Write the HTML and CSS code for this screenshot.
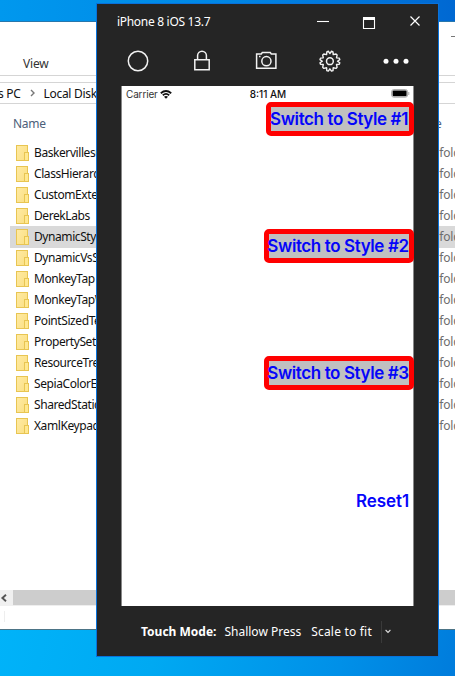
FILE: index.html
```html
<!DOCTYPE html>
<html lang="en">
<head>
<meta charset="utf-8">
<title>iPhone 8 iOS 13.7</title>
<link rel="stylesheet" href="styles.css">
</head>
<body>
<main class="desktop">
  <section class="explorer">
    <header class="ribbon"><span>View</span><i class="minimize-mark"></i></header>
    <nav class="address"><span>s PC</span><svg width="6" height="8" viewBox="0 0 6 8"><path d="M1 1l3 3-3 3" fill="none" stroke="#777" stroke-width="1.4"/></svg><span class="disk">Local Disk</span></nav>
    <div class="columns"><span>Name</span><span>Type</span></div>
    <ul class="files">
      <li><i class="folder"></i><span class="name">BaskervillesCoin</span><span class="type">File folder</span></li>
      <li><i class="folder"></i><span class="name">ClassHierarchy</span><span class="type">File folder</span></li>
      <li><i class="folder"></i><span class="name">CustomExtension</span><span class="type">File folder</span></li>
      <li><i class="folder"></i><span class="name">DerekLabs</span><span class="type">File folder</span></li>
      <li class="selected"><i class="folder"></i><span class="name">DynamicStyles</span><span class="type">File folder</span></li>
      <li><i class="folder"></i><span class="name">DynamicVsStatic</span><span class="type">File folder</span></li>
      <li><i class="folder"></i><span class="name">MonkeyTap</span><span class="type">File folder</span></li>
      <li><i class="folder"></i><span class="name">MonkeyTapWith</span><span class="type">File folder</span></li>
      <li><i class="folder"></i><span class="name">PointSizedText</span><span class="type">File folder</span></li>
      <li><i class="folder"></i><span class="name">PropertySetters</span><span class="type">File folder</span></li>
      <li><i class="folder"></i><span class="name">ResourceTrees</span><span class="type">File folder</span></li>
      <li><i class="folder"></i><span class="name">SepiaColorEffect</span><span class="type">File folder</span></li>
      <li><i class="folder"></i><span class="name">SharedStatics</span><span class="type">File folder</span></li>
      <li><i class="folder"></i><span class="name">XamlKeypad</span><span class="type">File folder</span></li>
    </ul>
    <div class="scrollbar"><span class="arrow"><svg width="8" height="8" viewBox="0 0 8 8"><path d="M6 .8L2.4 4 6 7.2" fill="none" stroke="#555" stroke-width="1.9"/></svg></span></div>
    <footer class="status"><i></i></footer>
  </section>

  <section class="simulator">
    <header class="titlebar">
      <span class="title">iPhone 8 iOS 13.7</span>
      <svg class="controls" width="106" height="16" viewBox="0 0 106 16" fill="none" stroke="#fff">
        <path d="M0 8.5h12" stroke-width="1.1"/>
        <path d="M46.5 5v10.5h11V5" stroke-width="1.1"/><path d="M46 5.5h12" stroke-width="3"/>
        <path d="M93.5 3.5l9 9m0-9l-9 9" stroke-width="1.2"/>
      </svg>
    </header>
    <nav class="toolbar">
      <svg width="24" height="24" viewBox="0 0 24 24"><circle cx="12" cy="12" r="9.7"/></svg>
      <svg width="24" height="24" viewBox="0 0 24 24"><path d="M4.8 10.7h14.4v10.1H4.8zM7.6 10.5V6.6a4.4 4.4 0 0 1 8.8 0v3.9"/></svg>
      <svg width="24" height="24" viewBox="0 0 24 24"><path d="M2.6 5h4.7l1-1.4h8l1 1.4h4.6v14.2H2.6z"/><circle cx="12.4" cy="12.2" r="4.6"/><path d="M5 7.6h1.5"/></svg>
      <svg width="24" height="24" viewBox="0 0 24 24"><path d="M10.3 2.2L11.9 4.6 13.5 2.2 15 2.8 15.2 5.6 18 5 19.1 6.1 18.5 8.9 21.3 9.1 21.8 10.6 19.5 12.2 21.8 13.8 21.3 15.3 18.5 15.5 19.1 18.3 18 19.4 15.2 18.8 15 21.6 13.5 22.1 11.9 19.8 10.3 22.1 8.8 21.6 8.6 18.8 5.8 19.4 4.7 18.3 5.3 15.5 2.5 15.3 2 13.8 4.3 12.2 2 10.6 2.5 9.1 5.3 8.9 4.7 6.1 5.8 5 8.6 5.6 8.8 2.8z" stroke-width="1.4" stroke-linejoin="round"/><circle cx="11.9" cy="12.2" r="3.4"/></svg>
      <svg width="28" height="24" viewBox="0 0 28 24" class="dots"><circle cx="4" cy="12.2" r="2.5"/><circle cx="14" cy="12.2" r="2.5"/><circle cx="24" cy="12.2" r="2.5"/></svg>
    </nav>
    <div class="screen">
      <div class="ios-status">
        <span class="carrier">Carrier <svg width="12" height="9" viewBox="0 0 12 9" fill="none" stroke="#111" stroke-width="1.8"><path d="M.8 3.2Q6-1.2 11.2 3.2M2.8 5.2q3.2-2.6 6.4 0"/><path d="M6 8.8L4 6.7q2-1.5 4 0z" fill="#111" stroke="none"/></svg></span>
        <span class="clock">8:11 AM</span>
        <svg class="battery" width="19" height="9" viewBox="0 0 19 9"><rect x=".6" y=".6" width="16" height="7.6" rx="2.2" fill="#fff" stroke="#aaa"/><rect x="1.6" y="1.5" width="14" height="5.8" rx="1" fill="#000"/><path d="M17.8 3v3" stroke="#aaa"/></svg>
      </div>
      <div class="stack">
        <div class="cell"><button class="styled first">Switch to Style #1</button></div>
        <div class="cell"><button class="styled">Switch to Style #2</button></div>
        <div class="cell"><button class="styled">Switch to Style #3</button></div>
        <div class="cell"><button class="reset">Reset1</button></div>
      </div>
    </div>
    <footer class="mode">
      <b>Touch Mode:</b><span class="press">Shallow Press</span><span class="scale">Scale to fit</span><i></i>
      <svg width="6" height="5" viewBox="0 0 6 5"><path d="M.6 1L3 3.4 5.4 1" fill="none" stroke="#ddd" stroke-width="1.1"/></svg>
    </footer>
  </section>
</main>
</body>
</html>
```
FILE: styles.css
```css
* { box-sizing: border-box; }
body { margin: 0; font-family: "Noto Sans", sans-serif; font-size: 12px; }
svg { display: block; flex: none; }
i { display: block; flex: none; }
.desktop {
  position: relative; width: 455px; height: 676px; overflow: hidden; white-space: nowrap;
  background: linear-gradient(90deg, #0098ee, #0087e5 50%, #0068d2) 0 0 / 100% 40px no-repeat,
    linear-gradient(105deg, #00b3f9, #00a9f2 35%, #0090e8 75%, #007cdc) 0 620px / 100% 56px no-repeat;
}
.explorer {
  position: absolute; left: 0; top: 21px; width: 455px; height: 609px;
  background: #fff; border-top: 1px solid #2877ac; border-bottom: 1px solid #4c7486; overflow: hidden;
}
.ribbon { height: 54px; border-bottom: 1px solid #d5d5d5; display: flex; justify-content: space-between; padding: 33px 0 0 23px; line-height: 18px; letter-spacing: -.15px; color: #333; }
.minimize-mark { width: 4px; height: 1px; background: #777; margin-top: -19px; }
.address { height: 22px; margin-top: 6px; border: solid #d5d5d5; border-width: 1px 0; display: flex; align-items: center; letter-spacing: -.3px; color: #111; }
.address span:first-child { margin-left: -2px; }
.address svg { margin: 0 8px 0 9px; }
.columns { height: 38px; display: flex; padding: 11px 0 0 13px; line-height: 18px; letter-spacing: -.3px; color: #4c607a; }
.columns span:first-child { width: 403px; flex: none; }
.columns span:last-child { color: #4c6482; }
.files { list-style: none; margin: 0; padding: 0 0 0 10px; height: 448px; }
.files li { height: 21px; display: flex; align-items: center; padding-left: 6px; color: #111; }
.files .selected { background: #d9d9d9; box-shadow: 0 1px #d9d9d9; }
.folder { width: 12px; height: 16px; border: 1px solid #e8c552; background: linear-gradient(115deg, #ffeaa2, #fadf83); margin: 0 6px 0 0; position: relative; }
.folder::after { content: ""; position: absolute; right: -2px; bottom: -1px; width: 3px; height: 7px; background: #ffe891; border: 1px solid #e8c552; }
.name { width: 384px; flex: none; letter-spacing: -.42px; }
.type { color: #6d6d6d; flex: none; letter-spacing: -.2px; }
.scrollbar { height: 16px; background: #cdcdcd; border-bottom: 1px solid #eee; }
.arrow { width: 13px; height: 16px; background: #f0f0f0; display: flex; align-items: center; }
.status { padding: 5px 0 0 4px; }
.status i { width: 1px; height: 11px; background: #eee; }
.simulator {
  position: absolute; left: 96px; top: 3px; width: 343px; height: 654px;
  background: #252525; border: 1px solid #0872dc; color: #fff;
}
.titlebar { height: 36px; display: flex; justify-content: space-between; align-items: center; padding: 0 15px 2px 20px; }
.title { letter-spacing: -.3px; }
.toolbar { height: 46px; display: flex; align-items: center; gap: 40px; padding: 0 0 4px 29px; }
.toolbar svg { fill: none; stroke: #f2f2f2; stroke-width: 1.5; }
.toolbar svg.dots { fill: #fff; stroke: none; }
.screen { width: 293px; height: 520px; margin-left: 24px; background: #fff; border: solid #888; border-width: 0 1px; color: #111; font-family: Inter, sans-serif; }
.ios-status { height: 16px; display: grid; grid-template-columns: 1fr auto 1fr; align-items: center; font-size: 10px; padding: 0 3px 0 4px; }
.carrier { display: flex; gap: 2px; align-items: center; color: #333; letter-spacing: -.15px; }
.clock { font-weight: 500; }
.battery { justify-self: end; margin-top: -1px; }
.stack { display: grid; grid-template-rows: repeat(4, 127.2px); }
.cell { display: flex; justify-content: flex-end; align-items: flex-start; }
button { font: 600 17px/24px Inter, sans-serif; color: #0505fa; background: none; border: 0; padding: 1px 4px 0; height: 34px; margin: 0; letter-spacing: -.1px; }
.styled { width: 150px; background: #c0c0c0; border: 5px solid #f00; border-radius: 5px; padding: 0 2px 0 0; display: flex; align-items: center; justify-content: center; margin-right: -1px; letter-spacing: -.4px; }
.first { width: 148px; }
.mode { display: flex; align-items: center; height: 49px; padding: 2px 0 0 44px; }
.press { margin-left: 8px; }
.scale { margin-left: 10px; letter-spacing: .2px; }
.mode i { width: 1px; height: 22px; background: #3a3a3a; margin: 0 3px 0 9px; }
```
